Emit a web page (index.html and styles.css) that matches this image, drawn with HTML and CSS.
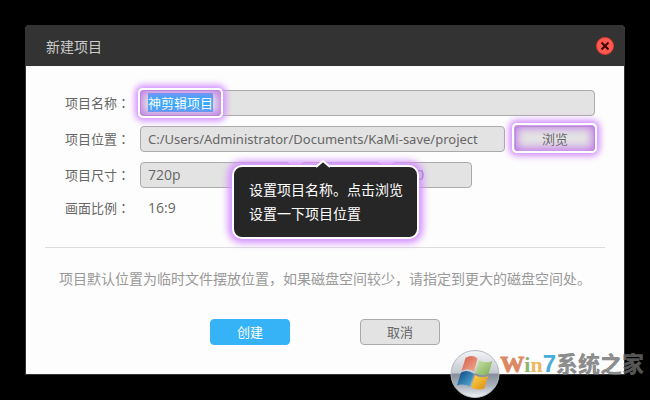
FILE: index.html
```html
<!DOCTYPE html>
<html lang="zh-CN">
<head>
    <meta charset="UTF-8">
    <meta name="viewport" content="width=device-width, initial-scale=1.0">
    <title>新建项目</title>
    <link rel="stylesheet" href="styles.css">
</head>
<body>
    <div class="dialog">
        <div class="dialog-header">
            <div class="title">新建项目</div>
            <button class="close" type="button" aria-label="关闭">
                <svg width="18" height="18" viewBox="0 0 18 18">
                    <circle cx="9" cy="9" r="8.5" fill="#ff5a52" stroke="#e2382f"/>
                    <path d="M5.500 5.500l7 7M12.500 5.500l-7 7" stroke="#3d0504" stroke-width="2"/>
                </svg>
            </button>
        </div>
        <form class="form">
            <div class="row">
                <label for="nameInput">项目名称<span class="colon" lang="zh-TW">：</span></label>
                <div class="field">
                    <input class="box" type="text" id="nameInput" value="神剪辑项目">
                    <span class="ring ring-name"></span>
                </div>
            </div>
            <div class="row">
                <label for="pathInput">项目位置<span class="colon" lang="zh-TW">：</span></label>
                <input class="box path" type="text" id="pathInput" value="C:/Users/Administrator/Documents/KaMi-save/project">
                <div class="browse">
                    <button class="box" type="button">浏览</button>
                    <span class="ring ring-browse"></span>
                </div>
            </div>
            <div class="row">
                <label for="sizeSelect">项目尺寸<span class="colon" lang="zh-TW">：</span></label>
                <div class="sizes">
                    <select class="box preset" id="sizeSelect">
                        <option>720p</option>
                    </select>
                    <input class="box size" type="text" value="1280" aria-label="宽">
                    <input class="box size" type="text" value="720" aria-label="高">
                    <div class="tip">
                        <svg class="tip-arrow" width="16" height="8" viewBox="0 0 16 8">
                            <path d="M1 7L8 1l7 6" fill="#262626" stroke="#fff" stroke-width="2"/>
                            <path d="M3 8L8 3l5 5z" fill="#262626"/>
                        </svg>
                        设置项目名称。点击浏览<br>设置一下项目位置
                    </div>
                </div>
            </div>
            <div class="row ratio">
                <div class="label">画面比例<span class="colon" lang="zh-TW">：</span></div>
                <div class="value">16:9</div>
            </div>
            <div class="hint">项目默认位置为临时文件摆放位置，如果磁盘空间较少，请指定到更大的磁盘空间处。</div>
            <div class="buttons">
                <button class="box create" type="button">创建</button>
                <button class="box" type="button">取消</button>
            </div>
        </form>
    </div>

    <div class="watermark">
        <svg class="orb" width="50" height="48" viewBox="0 0 50 48">
            <defs>
                <linearGradient id="glass" x1="0" y1="0" x2="0" y2="1">
                    <stop offset="0" stop-color="#f4f5f7"/>
                    <stop offset="0.48" stop-color="#c3c8d0"/>
                    <stop offset="0.5" stop-color="#868e9b"/>
                    <stop offset="0.75" stop-color="#a9b1bc"/>
                    <stop offset="1" stop-color="#f2f5f8"/>
                </linearGradient>
                <linearGradient id="red" x1="0" y1="0" x2="1" y2="1">
                    <stop offset="0" stop-color="#d8584a"/>
                    <stop offset="1" stop-color="#eeb08e"/>
                </linearGradient>
                <linearGradient id="green" x1="0" y1="0" x2="1" y2="1">
                    <stop offset="0" stop-color="#d1e4b0"/>
                    <stop offset="1" stop-color="#78ab50"/>
                </linearGradient>
                <linearGradient id="blue" x1="0" y1="0" x2="1" y2="1">
                    <stop offset="0" stop-color="#07427e"/>
                    <stop offset="1" stop-color="#5ab2dd"/>
                </linearGradient>
                <linearGradient id="yellow" x1="0" y1="0" x2="1" y2="1">
                    <stop offset="0" stop-color="#ffd84c"/>
                    <stop offset="1" stop-color="#d98a10"/>
                </linearGradient>
            </defs>
            <ellipse cx="25" cy="24" rx="24" ry="23.5" fill="url(#glass)" stroke="#b4bac3"/>
            <path d="M15.500 8Q22 4 27.500 8.500L24 21.500Q18 17.500 11.500 21z" fill="url(#red)"/>
            <path d="M29 10Q35 14 42.500 11L38.500 24Q32 27 25.500 23z" fill="url(#green)"/>
            <path d="M11 22.500Q17 19 23.500 23.500L20 36.500Q13 33 7 35.500z" fill="url(#blue)"/>
            <path d="M25 25Q31 29 38 26L34.500 38.500Q27 41 21 37.500z" fill="url(#yellow)"/>
        </svg>
        <div class="brand"><span class="w">W</span><span class="i">i</span><span class="n">n</span><span class="seven">7</span><span class="name">系统之家</span></div>
    </div>

    <script>
        // project name starts out selected
        const nameInput = document.getElementById('nameInput');
        nameInput.focus();
        nameInput.select();
    </script>
</body>
</html>
```

FILE: styles.css
```css
* {
    box-sizing: border-box;
}

body {
    margin: 0;
    padding: 25px;
    background: #000;
    font-family: "Open Sans", "Noto Sans CJK SC", sans-serif;
    font-size: 13px;
    color: #666;
}

.dialog {
    background: #fdfdfd;
    border: 1px solid #333;
    border-radius: 4px 4px 0 0;
}

.dialog-header {
    display: flex;
    justify-content: space-between;
    align-items: center;
    height: 40px;
    padding: 0 10px 0 20px;
    background: #333;
}

.title {
    font-size: 14px;
    color: #ccc;
}

.close {
    display: flex;
    padding: 0;
    border: none;
    background: none;
    cursor: pointer;
}

.form {
    padding: 24px 19px 29px;
}

.row {
    display: flex;
    align-items: center;
    gap: 10px;
    padding: 0 10px 0 20px;
    margin-bottom: 10px;
}

.row label,
.row .label {
    flex: none;
    width: 65px;
    line-height: 20px;
    white-space: nowrap;
}

.colon {
    font-family: "Noto Sans CJK TC", sans-serif;
}

.box {
    height: 26px;
    padding: 0 7px 2px;
    border: 1px solid #aaa;
    border-radius: 4px;
    background: #e3e3e3;
    font-family: inherit;
    font-size: 14px;
    color: #666;
    outline: none;
    appearance: none;
}

button.box {
    width: 80px;
    font-size: 13px;
    cursor: pointer;
}

.field {
    position: relative;
    flex: 1;
}

.field .box {
    display: block;
    width: 100%;
    font-size: 13px;
}

.field .box::selection {
    background: rgba(54, 169, 251, 0.99);
    color: #fff;
}

.row .path {
    flex: 1;
    min-width: 0;
    padding-bottom: 1px;
    font-family: "Noto Sans", sans-serif;
    font-size: 13px;
}

.browse {
    position: relative;
}

.browse .box {
    display: block;
}

/* glowing frames over the controls */
.ring {
    position: absolute;
    border: 2px solid #fff;
    border-radius: 5px;
    box-shadow: 0 0 6px 3px #d490ff, inset 0 0 8px 3px #c27ae8;
    pointer-events: none;
}

.ring-name {
    left: -2px;
    top: -2px;
    width: 85px;
    height: 30px;
}

.ring-browse {
    left: -3px;
    top: -3px;
    right: -2px;
    bottom: -1px;
}

.sizes {
    position: relative;
    display: flex;
    gap: 11px;
}

.preset {
    width: 150px;
}

.size {
    width: 80px;
}

.tip {
    position: absolute;
    left: 92px;
    top: 3px;
    padding: 11px 14px 11px 15px;
    border: 2px solid #fff;
    border-radius: 10px;
    background: #262626;
    box-shadow: 0 0 7px 4px #d490ff;
    font-size: 14px;
    line-height: 24px;
    white-space: nowrap;
    color: #fff;
}

.tip-arrow {
    position: absolute;
    left: 81px;
    top: -7px;
}

.ratio {
    height: 20px;
}

.value {
    padding: 0 0 1px 8px;
    font-size: 14px;
}

.hint {
    padding: 19px 0 0 14px;
    margin-top: 29px;
    border-top: 1px solid #ddd;
    font-size: 14px;
    line-height: 24px;
    color: #999;
}

.buttons {
    display: flex;
    justify-content: center;
    gap: 70px;
    margin-top: 28px;
}

.create {
    border-color: #36b3f7;
    background: #36b3f7;
    color: #fff;
}

.watermark {
    position: absolute;
    right: 6px;
    bottom: 2px;
    display: flex;
}

.brand {
    display: flex;
    align-items: baseline;
    height: 24px;
    font-family: "Liberation Serif", serif;
    font-size: 22px;
    font-weight: bold;
    line-height: 24px;
}

.w {
    font-size: 24px;
    color: #dc8863;
    -webkit-text-stroke: 1px #dc8863;
}

.i {
    color: #8db36f;
}

.n {
    color: #f0b660;
}

.seven {
    font-family: "Liberation Sans", sans-serif;
    font-size: 24px;
    color: #47aedb;
}

.name {
    font-family: "Noto Sans CJK SC", sans-serif;
    font-size: 22px;
    font-weight: 900;
    color: rgba(110, 110, 110, 0.8);
}
```
